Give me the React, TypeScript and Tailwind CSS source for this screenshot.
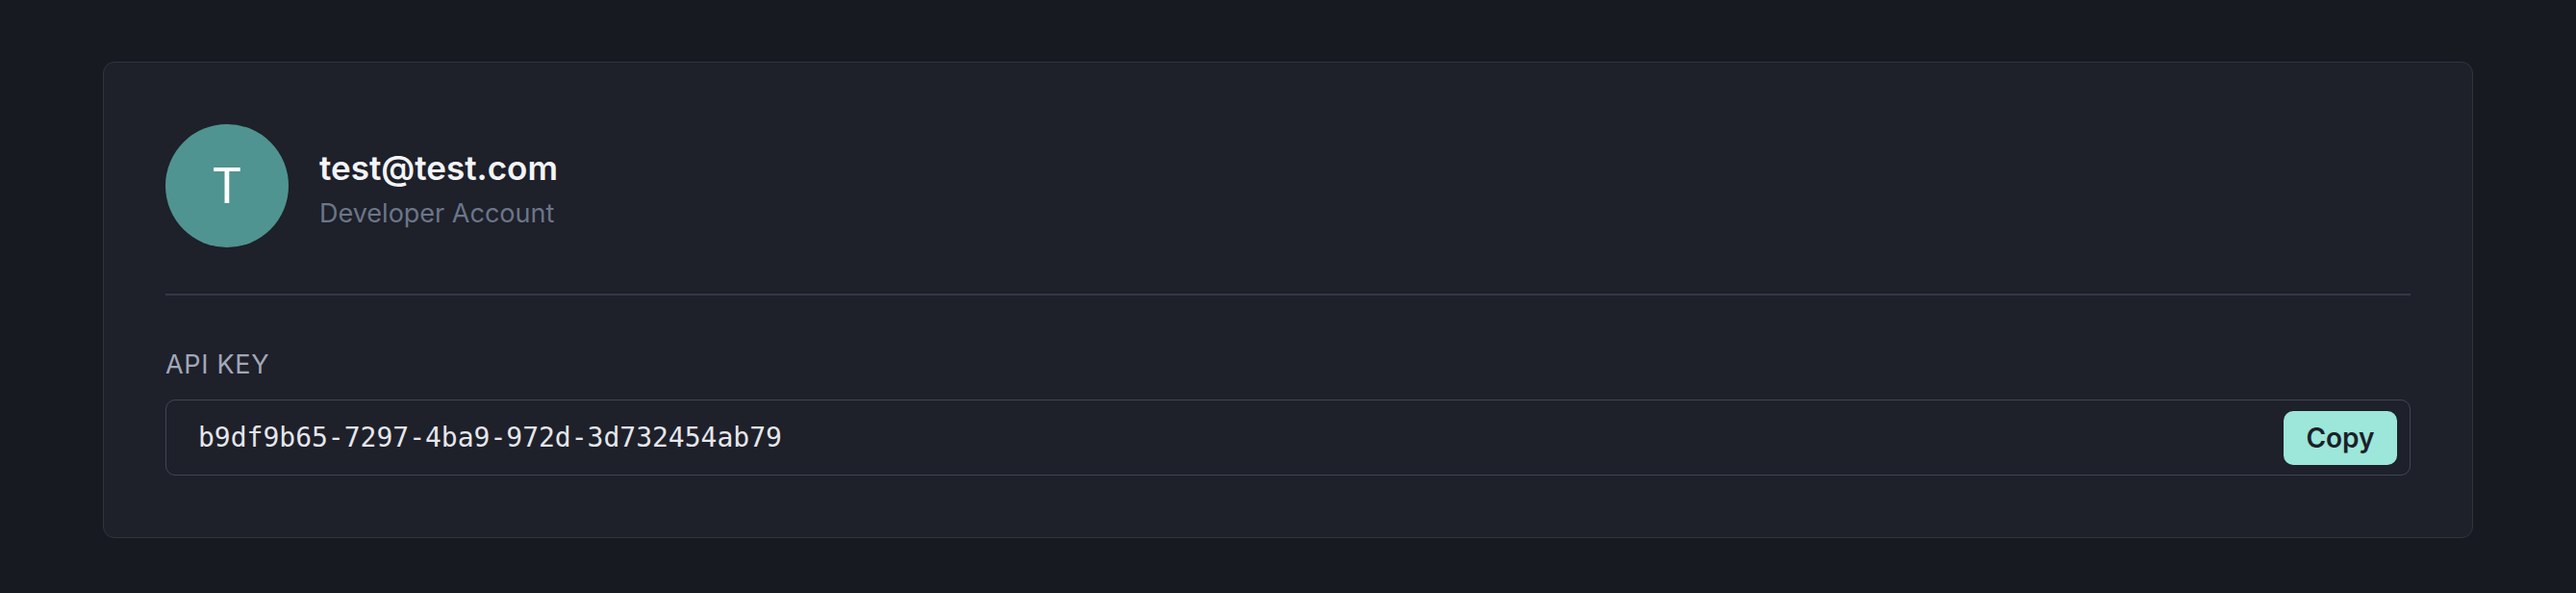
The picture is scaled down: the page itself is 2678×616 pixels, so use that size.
export default function App() {
  const apiKey = 'b9df9b65-7297-4ba9-972d-3d732454ab79';

  return (
    <div className="min-h-screen w-full bg-[#181a21] pt-16 pb-14" style={{ fontFamily: 'Inter, "Noto Sans", sans-serif' }}>
      <section className="mx-auto w-[2464px] rounded-xl border border-[#30343f] bg-[#1e202a] p-16">
        <div className="flex items-center gap-8 border-b-2 border-[#343947] pb-12">
          <div className="flex h-32 w-32 shrink-0 items-center justify-center rounded-full bg-[#4f9490] text-[50px] leading-none text-white">
            T
          </div>
          <div className="flex flex-col pt-[6px]">
            <h2 className="text-[35px] leading-[44px] font-semibold text-[#f3f4f6]">test@test.com</h2>
            <p className="mt-[8px] text-[27px] leading-[36px] text-[#6b7689]">Developer Account</p>
          </div>
        </div>

        <div className="pt-[54px]">
          <label className="block text-[27px] leading-[36px] tracking-wide text-[#a1a8b8] uppercase">API Key</label>
          <div className="mt-[18px] flex h-[79px] items-center justify-between rounded-[10px] border-[1.5px] border-[#424654] pl-[33px] pr-[13px]">
            <span className="text-[28px] text-[#e5e7eb]" style={{ fontFamily: '"DejaVu Sans Mono", monospace' }}>
              {apiKey}
            </span>
            <button className="h-[56px] w-[118px] rounded-[10px] bg-[#9ce6da] text-[28px] font-semibold text-[#1c1f28]">
              Copy
            </button>
          </div>
        </div>
      </section>
    </div>
  );
}
